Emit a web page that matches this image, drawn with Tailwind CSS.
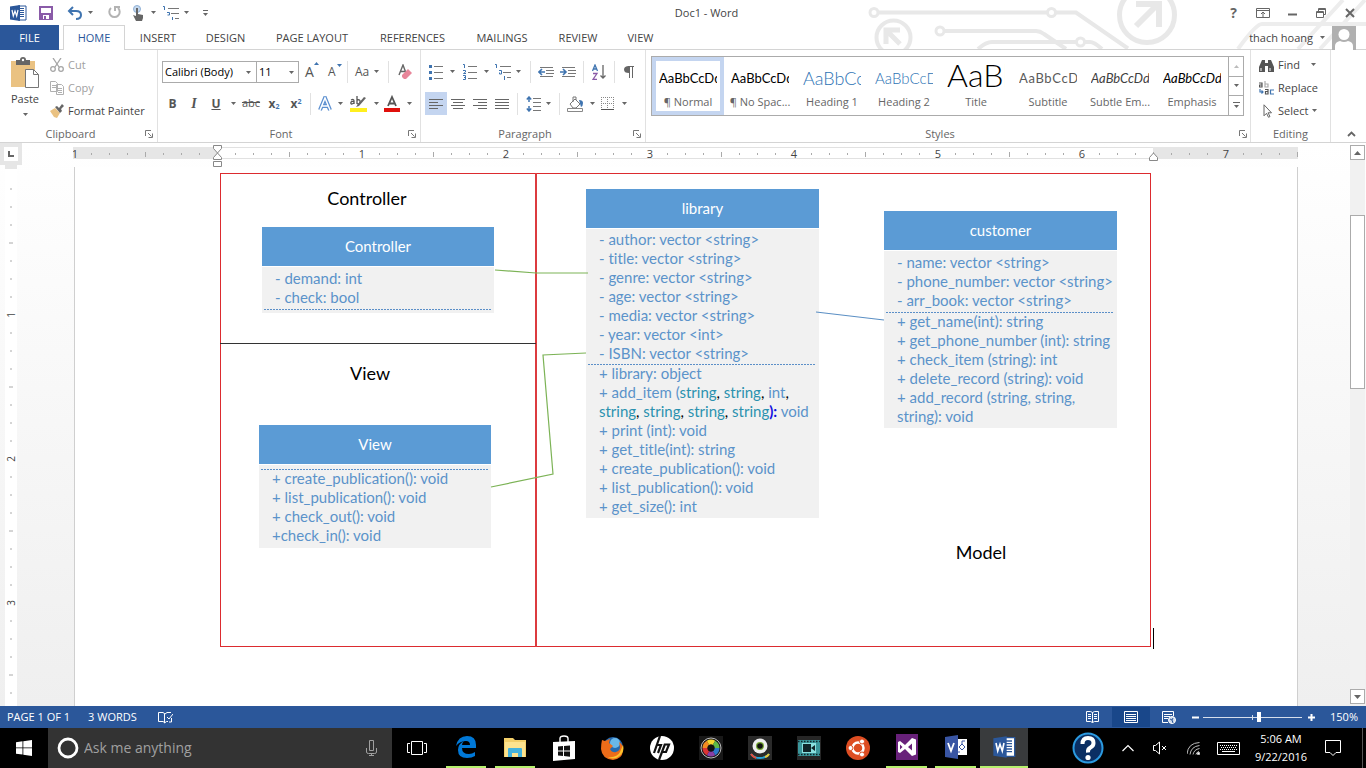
<!DOCTYPE html>
<html lang="en">
<head>
<meta charset="utf-8">
<title>Doc1 - Word</title>
<script src="https://cdn.jsdelivr.net/npm/@tailwindcss/browser@4"></script>
</head>
<body class="flex h-screen flex-col overflow-hidden bg-white font-['Open_Sans','Noto_Sans',sans-serif] text-[11px] leading-4 text-[#444]">

<svg class="hidden" aria-hidden="true">
  <symbol id="dn" viewBox="0 0 7 4"><path d="M1 0h5L3.500 3z" fill="#666"/></symbol>
  <symbol id="launch" viewBox="0 0 8 8"><path d="M.5 6V.5H6M3 3l3.500 3.500M7.500 3.500v4h-4" fill="none" stroke="#777"/></symbol>
  <symbol id="word" viewBox="0 0 18 18"><path d="M9 2h8v14H9z" fill="#fff" stroke="#2b579a"/><path d="M10 4.500h5M10 6.500h5M10 8.500h5M10 10.500h5M10 12.500h5" stroke="#2b579a"/><path d="M1 2.500L11 1v16L1 15.500z" fill="#2b579a"/><path d="M3 6l1.300 6L6 7l1.700 5L9 6" fill="none" stroke="#fff" stroke-width="1.200"/></symbol>
</svg>

<header class="relative h-[50px] shrink-0 border-b border-[#d4d4d4]">
  <svg class="absolute top-0 right-0 h-[49px] w-[526px]" viewBox="840 0 526 49" fill="none" stroke="#e8e8e8" stroke-width="4" aria-hidden="true">
    <circle cx="874" cy="12.500" r="4" stroke-width="3"/><path d="M878 12.500h169M1056 12.500h20l52 36"/><circle cx="1051.500" cy="12.500" r="4" stroke-width="3"/>
    <circle cx="940" cy="31" r="4" stroke-width="3"/><path d="M944 31h92q4 0 8 3l22 15M978 49q8-7 14-7h84M1085 42h5q4 0 12 7"/><circle cx="1080.500" cy="42" r="4" stroke-width="3"/>
    <circle cx="893.500" cy="37.500" r="17"/><path d="M900 44l-12-12M886 44V30h14" stroke-width="5"/>
    <circle cx="1147" cy="15" r="27.500" stroke-width="5"/><path d="M1136 26l22-22M1136 4h23v23" stroke-width="6"/>
    <path d="M1238 49q18-25 24-25h104M1298 49l45-49M1320 49l45-49" stroke="#ededed"/>
  </svg>
  <div class="relative flex h-[25px] items-center">
    <div class="flex w-[220px] items-center gap-[10px] pl-[9px]">
      <svg class="size-[18px]"><use href="#word"/></svg>
      <button aria-label="Save" class="ml-[2px]"><svg class="size-[14px]" viewBox="0 0 14 14"><path d="M1 1h12v12H1z" fill="#fff" stroke="#8a5ba8" stroke-width="2"/><path d="M1 7h12v6H1z" fill="#8a5ba8"/><path d="M4 9h6v4H4z" fill="#fff"/><path d="M5 10h2v3H5z" fill="#8a5ba8"/></svg></button>
      <button aria-label="Undo" class="ml-[4px] flex items-center gap-[5px]"><svg class="h-4 w-[15px]" viewBox="0 0 15 16" fill="none" stroke="#3f74b0" stroke-width="2"><path d="M6 2L2 6l4 4M2 6h7q5 0 5 4t-5 4"/></svg><svg class="h-1 w-[7px]"><use href="#dn"/></svg></button>
      <button aria-label="Repeat" class="ml-[3px]"><svg class="size-[15px]" viewBox="0 0 15 15" fill="none" stroke="#b3b3b3" stroke-width="2"><path d="M4 3a5.200 5.200 0 1 0 7 0M8 6V2h5"/></svg></button>
      <button aria-label="Touch mode" class="flex items-center gap-[5px]"><svg class="h-4 w-[13px]" viewBox="0 0 13 16"><circle cx="5" cy="4" r="3.500" fill="#c6d9ee" stroke="#8fb0d6"/><path d="M4 3h2v6l5 1v3l-1 3H4L1 10l3 1z" fill="#666"/></svg><svg class="h-1 w-[7px]"><use href="#dn"/></svg></button>
    </div>
    <button aria-label="Multilevel list" class="-ml-[57px] flex items-center gap-[4px]"><svg class="h-4 w-4" viewBox="0 0 16 16"><path d="M5 3.500h11M8 8.500h8M12 13.500h4" stroke="#777"/><path d="M0 1.500h1.500V5M4 7.500h2.500V10H4.500M9.500 12v3" fill="none" stroke="#3f74b0"/></svg><svg class="h-1 w-[7px]"><use href="#dn"/></svg></button>
    <button aria-label="Customize toolbar" class="ml-[12px]"><svg class="h-2 w-[7px]" viewBox="0 0 7 8"><path d="M1 1.500h5" stroke="#666"/><path d="M1 4h5L3.500 7z" fill="#666"/></svg></button>
    <p class="flex-1 pl-[298px] text-center">Doc1 - Word</p>
    <div class="flex w-[460px] justify-end gap-[15px] pr-[9px] text-[#666]">
      <button aria-label="Help" class="w-[15px] text-sm leading-4 font-bold">?</button>
      <button aria-label="Ribbon display options"><svg class="h-3 w-[14px]" viewBox="0 0 14 12" fill="none" stroke="#666"><path d="M.5 1.500h13v9H.5zM.5 3.500h13M7 10V5M5 7l2-2 2 2"/></svg></button>
      <button aria-label="Minimize"><svg class="h-3 w-[14px]" viewBox="0 0 14 12"><path d="M3 7.500h9" stroke="#666" stroke-width="2"/></svg></button>
      <button aria-label="Restore"><svg class="h-3 w-[14px]" viewBox="0 0 14 12" fill="none" stroke="#666"><path d="M4.500 4V1.500h7v6H9M2.500 4.500h7v6h-7zM2.500 5.500h7M4.500 2.500h7"/></svg></button>
      <button aria-label="Close"><svg class="h-3 w-[14px]" viewBox="0 0 14 12"><path d="M3 2l8 8M11 2l-8 8" stroke="#666" stroke-width="2"/></svg></button>
    </div>
  </div>
  <nav class="relative flex h-[25px] items-stretch" aria-label="Ribbon tabs">
    <button class="w-[59px] bg-[#2b579a] text-white">FILE</button>
    <button class="ml-[4px] h-[25px] w-[62px] border border-b-0 border-[#d4d4d4] bg-white text-[#2b579a]">HOME</button>
    <button class="w-[66px]">INSERT</button>
    <button class="w-[69px]">DESIGN</button>
    <button class="w-[104px]">PAGE LAYOUT</button>
    <button class="w-[97px]">REFERENCES</button>
    <button class="w-[82px]">MAILINGS</button>
    <button class="w-[70px]">REVIEW</button>
    <button class="w-[55px]">VIEW</button>
    <button class="ml-auto flex items-center gap-[6px] pr-[10px]">thach hoang <svg class="h-1 w-[7px]"><use href="#dn"/></svg>
      <svg class="size-6" viewBox="0 0 24 24"><path d="M0 0h24v24H0z" fill="#b0b0b0"/><circle cx="12" cy="8.500" r="5.500" fill="#fff"/><path d="M3 24v-4q0-4 5-5 4 2 8 0 5 1 5 5v4z" fill="#fff"/></svg></button>
  </nav>
</header>

<section class="flex h-[93px] shrink-0 border-b border-[#d4d4d4]" aria-label="Ribbon">
  <!-- Clipboard -->
  <div class="flex w-[158px] flex-col border-r border-[#e1e1e1]">
    <div class="flex flex-1">
      <button class="flex w-[50px] flex-col items-center pt-[7px]">
        <svg class="h-8 w-[30px]" viewBox="0 0 30 32"><path d="M1 4h24v26H1z" fill="#eac282"/><path d="M6 3h4q0-3 3-3t3 3h4v5H6z" fill="#666"/><circle cx="13" cy="3" r="1.200" fill="#fff"/><path d="M15.500 12.500h8l5 5v13h-13z" fill="#fff" stroke="#777"/><path d="M23.500 12.500v5h5" fill="none" stroke="#777"/></svg>
        <span class="pt-[2px]">Paste</span><svg class="mt-[6px] h-1 w-[7px]"><use href="#dn"/></svg>
      </button>
      <div class="flex flex-col gap-[7px] pt-[7px] text-[#a0a0a0]">
        <button class="flex items-center gap-1"><svg class="size-[14px]" viewBox="0 0 14 14" fill="none" stroke="#a5a5a5" stroke-width="1.300"><path d="M3 0l6 9M11 0L5 9"/><circle cx="3" cy="11" r="2.300"/><circle cx="11" cy="11" r="2.300"/></svg>Cut</button>
        <button class="flex items-center gap-1"><svg class="size-[14px]" viewBox="0 0 14 14" fill="#fff" stroke="#b0b0b0"><path d="M.5.500h5l2 2v8h-7zM2 4.500h4M2 6.500h4M6.500 3.500h5l2 2v8h-7zM8 7.500h4M8 9.500h4M8 11.500h4"/></svg>Copy</button>
        <button class="flex items-center gap-1 text-[#444]"><svg class="size-[14px]" viewBox="0 0 14 14"><path d="M0 7l5-3 5 5-3 5-3-1z" fill="#eac282"/><path d="M5 3l2-1 2 2 3-4 2 2-3 3 1 2-2 2z" fill="#666"/></svg>Format Painter</button>
      </div>
    </div>
    <div class="flex h-4 items-center text-[#666]"><span class="flex-1 pr-1 text-center">Clipboard</span><button aria-label="Clipboard options" class="w-[12px]"><svg class="size-2"><use href="#launch"/></svg></button></div>
  </div>
  <!-- Font -->
  <div class="flex w-[263px] flex-col border-r border-[#e1e1e1]">
    <div class="flex flex-1 flex-col pl-[4px]">
      <div class="mt-[11px] flex h-[22px] items-center">
        <div class="relative h-[22px] w-[95px] border border-[#ababab]"><select aria-label="Font name" class="h-full w-full appearance-none pl-[2px] text-[11px] text-black"><option>Calibri (Body)</option></select><svg class="pointer-events-none absolute top-[9px] right-1 h-1 w-[7px]"><use href="#dn"/></svg></div>
        <div class="relative -ml-px h-[22px] w-[43px] border border-[#ababab]"><select aria-label="Font size" class="h-full w-full appearance-none pl-[2px] text-[11px] text-black"><option>11</option></select><svg class="pointer-events-none absolute top-[9px] right-[3px] h-1 w-[7px]"><use href="#dn"/></svg></div>
        <button class="relative ml-[6px] w-[16px] text-left text-sm text-[#555]" aria-label="Grow font">A<svg class="absolute top-0 right-[2px] h-[3px] w-[5px]" viewBox="0 0 5 3"><path d="M0 3h5L2.500 0z" fill="#3f74b0"/></svg></button>
        <button class="relative ml-[7px] w-[16px] text-left text-xs text-[#555]" aria-label="Shrink font">A<svg class="absolute top-0 right-[2px] h-[3px] w-[5px]" viewBox="0 0 5 3"><path d="M0 0h5L2.500 3z" fill="#3f74b0"/></svg></button>
        <i class="ml-[3px] h-[22px] w-px bg-[#e1e1e1]"></i>
        <button class="ml-[7px] flex items-center gap-[4px] text-xs text-[#555]" aria-label="Change case">Aa<svg class="h-1 w-[7px]"><use href="#dn"/></svg></button>
        <i class="ml-[8px] h-[22px] w-px bg-[#e1e1e1]"></i>
        <button class="ml-[9px]" aria-label="Clear formatting"><svg class="h-4 w-[14px]" viewBox="0 0 14 16"><path d="M1 11L5 1l3 8M2.500 7.500h5" fill="none" stroke="#666" stroke-width="1.400"/><path d="M4 11l6-6 4 4-6 6H6l-2-2z" fill="#e8869a"/></svg></button>
      </div>
      <div class="mt-[9px] flex h-[23px] items-center text-xs text-[#555]">
        <button class="w-[21px] font-bold">B</button>
        <button class="w-[22px] font-['Liberation_Serif',serif] text-sm font-bold italic">I</button>
        <button class="w-[22px] font-bold underline">U</button>
        <button class="flex w-[12px] justify-center" aria-label="Underline style"><svg class="h-1 w-[7px]"><use href="#dn"/></svg></button>
        <button class="w-[24px] text-[11px] line-through">abc</button>
        <button class="w-[22px] font-bold">x<sub class="text-[7px] text-[#3f74b0]">2</sub></button>
        <button class="w-[22px] font-bold">x<sup class="text-[7px] text-[#3f74b0]">2</sup></button>
        <i class="mx-[3px] h-[22px] w-px bg-[#e1e1e1]"></i>
        <button class="flex w-[34px] items-center gap-[4px] pl-[3px]" aria-label="Text effects"><svg class="size-4" viewBox="0 0 16 16" fill="none"><path d="M3 14L8 2l5 12M5 10h6" stroke="#5b8fd0" stroke-width="4"/><path d="M3 14L8 2l5 12M5 10h6" stroke="#fff" stroke-width="1.500"/></svg><svg class="h-1 w-[7px]"><use href="#dn"/></svg></button>
        <button class="flex w-[35px] items-center gap-[6px] pl-[2px]" aria-label="Highlight color"><svg class="size-[17px]" viewBox="0 0 17 17"><path d="M0 13h17v4H0z" fill="#ffef1f"/><path d="M1 5q3-1.500 3 1v3M4 6.500Q.8 6 .8 8T4 8M7 1v8M7 5q3.500-1 3 2T7 8.500" fill="none" stroke="#555" stroke-width="1.300"/><path d="M6 12l3-1 7-8-2-1-6 7z" fill="#666"/></svg><svg class="h-1 w-[7px]"><use href="#dn"/></svg></button>
        <button class="flex w-[34px] items-center gap-[6px] pl-px" aria-label="Font color"><svg class="h-[17px] w-4" viewBox="0 0 16 17"><path d="M4 11L8 2l4 9M5.500 8.500h5" fill="none" stroke="#555" stroke-width="1.800"/><path d="M0 13h16v4H0z" fill="#e0100c"/></svg><svg class="h-1 w-[7px]"><use href="#dn"/></svg></button>
      </div>
    </div>
    <div class="flex h-4 items-center text-[#666]"><span class="flex-1 pr-1 text-center">Font</span><button aria-label="Font options" class="w-[12px]"><svg class="size-2"><use href="#launch"/></svg></button></div>
  </div>
  <!-- Paragraph -->
  <div class="flex w-[225px] flex-col border-r border-[#e1e1e1]">
    <div class="flex flex-1 flex-col pl-[4px]">
      <div class="mt-[11px] flex h-[22px] items-center">
        <button class="flex w-[34px] items-center gap-[6px] pl-[4px]" aria-label="Bullets"><svg class="h-4 w-[14px]" viewBox="0 0 14 16"><path d="M5 2.500h9M5 8.500h9M5 14.500h9" stroke="#777"/><path d="M0 1h3v3H0zM0 7h3v3H0zM0 13h3v3H0z" fill="#3f74b0"/></svg><svg class="h-1 w-[7px]"><use href="#dn"/></svg></button>
        <button class="flex w-[34px] items-center gap-[6px] pl-[4px]" aria-label="Numbering"><svg class="h-4 w-[14px]" viewBox="0 0 14 16"><path d="M5 2.500h9M5 8.500h9M5 14.500h9" stroke="#777"/><path d="M0 .500h1.500V4M0 6.500h2.500v1.500L.5 9.500H3M0 11.500h2.500v4H0M1 13.500h1" fill="none" stroke="#3f74b0"/></svg><svg class="h-1 w-[7px]"><use href="#dn"/></svg></button>
        <button class="flex w-[34px] items-center gap-[4px] pl-[2px]" aria-label="Multilevel list"><svg class="size-4" viewBox="0 0 16 16"><path d="M5 2.500h11M8 8.500h8M12 13.500h4" stroke="#777"/><path d="M0 .500h1.500V4M4 6.500h2.500V10H4.500V8.500M9.500 12v4" fill="none" stroke="#3f74b0"/></svg><svg class="h-1 w-[7px]"><use href="#dn"/></svg></button>
        <i class="ml-[3px] h-[22px] w-px bg-[#e1e1e1]"></i>
        <button class="ml-[7px]" aria-label="Decrease indent"><svg class="h-3 w-4" viewBox="0 0 16 12"><path d="M2 1.500h13M8 4.500h8M8 7.500h8M2 10.500h13" stroke="#777"/><path d="M7 6H1M4 3L1 6l3 3" fill="none" stroke="#3f74b0" stroke-width="1.600"/></svg></button>
        <button class="ml-[6px]" aria-label="Increase indent"><svg class="h-3 w-4" viewBox="0 0 16 12"><path d="M2 1.500h13M8 4.500h8M8 7.500h8M2 10.500h13" stroke="#777"/><path d="M0 6h6M3 3l3 3-3 3" fill="none" stroke="#3f74b0" stroke-width="1.600"/></svg></button>
        <i class="ml-[7px] h-[22px] w-px bg-[#e1e1e1]"></i>
        <button class="ml-[8px]" aria-label="Sort"><svg class="h-4 w-[14px]" viewBox="0 0 14 16" fill="none"><path d="M.5 7L3 1l2.500 6M1.500 5h3" stroke="#3f74b0" stroke-width="1.300"/><path d="M1 9.500h4L1 15.500h4" stroke="#8a5ba8" stroke-width="1.300"/><path d="M11 1v13M8.500 11.500L11 14l2.500-2.500" stroke="#666" stroke-width="1.300"/></svg></button>
        <i class="ml-[8px] h-[22px] w-px bg-[#e1e1e1]"></i>
        <button class="ml-[9px]" aria-label="Show marks"><svg class="h-3 w-[10px]" viewBox="0 0 10 12"><path d="M4 .5h6M5.500 0v12M8.500 0v12" stroke="#666"/><path d="M5 0v7Q0 7 0 3.500T5 0z" fill="#666"/></svg></button>
      </div>
      <div class="mt-[9px] flex h-[23px] items-center">
        <button class="flex h-[23px] w-[22px] items-center justify-center bg-[#c4d5f0]" aria-label="Align left"><svg class="h-3 w-[14px]" viewBox="0 0 14 12"><path d="M0 1.500h14M0 4.500h9M0 7.500h14M0 10.500h9" stroke="#666"/></svg></button>
        <button class="flex w-[22px] justify-center" aria-label="Center"><svg class="h-3 w-[14px]" viewBox="0 0 14 12"><path d="M0 1.500h14M2 4.500h10M0 7.500h14M2 10.500h10" stroke="#666"/></svg></button>
        <button class="flex w-[22px] justify-center" aria-label="Align right"><svg class="h-3 w-[14px]" viewBox="0 0 14 12"><path d="M0 1.500h14M5 4.500h9M0 7.500h14M5 10.500h9" stroke="#666"/></svg></button>
        <button class="flex w-[22px] justify-center" aria-label="Justify"><svg class="h-3 w-[14px]" viewBox="0 0 14 12"><path d="M0 1.500h14M0 4.500h14M0 7.500h14M0 10.500h14" stroke="#666"/></svg></button>
        <i class="ml-[4px] h-[22px] w-px bg-[#e1e1e1]"></i>
        <button class="ml-[8px] flex w-[33px] items-center gap-[4px]" aria-label="Line spacing"><svg class="h-4 w-[15px]" viewBox="0 0 15 16" fill="none"><path d="M7 2.500h8M7 6.500h8M7 10.500h8M7 14.500h8" stroke="#777"/><path d="M3 1v5M.8 3.500L3 1l2.200 2.500M3 10v5M.8 12.500L3 15l2.200-2.500" stroke="#3f74b0" stroke-width="1.500"/></svg><svg class="h-1 w-[7px]"><use href="#dn"/></svg></button>
        <i class="h-[22px] w-px bg-[#e1e1e1]"></i>
        <button class="ml-[7px] flex w-[34px] items-center gap-[5px]" aria-label="Shading"><svg class="h-4 w-[17px]" viewBox="0 0 17 16" fill="none"><path d="M.5 12.500h15v3H.5z" stroke="#888"/><path d="M3 8l5-5 5 5-4 4H6zM6 6V1h3v3" stroke="#777"/><path d="M12 4q4 0 4 3t-2 4z" fill="#3f74b0"/></svg><svg class="h-1 w-[7px]"><use href="#dn"/></svg></button>
        <button class="flex items-center gap-[7px]" aria-label="Borders"><svg class="size-[13px]" viewBox="0 0 13 13"><path d="M.5 0v12M6.500 0v12M12.500 0v12M0 .5h13M0 6.500h13" stroke="#888" stroke-dasharray="1 1"/><path d="M0 12.500h13" stroke="#555"/></svg><svg class="h-1 w-[7px]"><use href="#dn"/></svg></button>
      </div>
    </div>
    <div class="flex h-4 items-center text-[#666]"><span class="flex-1 pr-1 text-center">Paragraph</span><button aria-label="Paragraph options" class="w-[12px]"><svg class="size-2"><use href="#launch"/></svg></button></div>
  </div>
  <!-- Styles -->
  <div class="flex min-w-0 flex-1 flex-col border-r border-[#e1e1e1]">
    <div class="flex-1 pt-[6px] pr-[6px] pl-[5px]">
      <div class="flex h-[60px] border border-[#ababab] text-center text-[#666]">
        <div class="grid min-w-0 flex-1 grid-cols-8">
          <button class="flex flex-col border-4 border-[#c4d5f0] px-[3px]"><span class="flex h-[34px] w-full items-center overflow-hidden font-['Lato'] text-[13px] whitespace-nowrap text-black">AaBbCcDd</span><span class="-mt-px w-full whitespace-nowrap">¶ Normal</span></button>
          <button class="flex flex-col p-1 px-[7px]"><span class="flex h-[34px] w-full items-center overflow-hidden font-['Lato'] text-[13px] whitespace-nowrap text-black">AaBbCcDd</span><span class="-mx-1 -mt-px whitespace-nowrap">¶ No Spac...</span></button>
          <button class="flex flex-col p-1 px-[7px]"><span class="flex h-[34px] w-full items-center overflow-hidden font-['Lato'] text-lg font-light whitespace-nowrap text-[#2e74b5]">AaBbCc</span><span class="-mx-1 -mt-px self-center whitespace-nowrap">Heading 1</span></button>
          <button class="flex flex-col p-1 px-[7px]"><span class="flex h-[34px] w-full items-center overflow-hidden font-['Lato'] text-[15px] font-light whitespace-nowrap text-[#2e74b5]">AaBbCcD</span><span class="-mx-1 -mt-px self-center whitespace-nowrap">Heading 2</span></button>
          <button class="flex flex-col p-1 px-[7px]"><span class="flex h-[34px] w-full items-center overflow-hidden pb-[6px] font-['Lato'] text-[32px] font-light whitespace-nowrap text-black">AaBb</span><span class="-mt-px w-full">Title</span></button>
          <button class="flex flex-col p-1 px-[7px]"><span class="flex h-[34px] w-full items-center overflow-hidden font-['Lato'] text-[13px] tracking-wider whitespace-nowrap text-[#5a5a5a]">AaBbCcD</span><span class="-mt-px w-full">Subtitle</span></button>
          <button class="flex flex-col p-1 px-[7px]"><span class="flex h-[34px] w-full items-center overflow-hidden font-['Lato'] text-[13px] whitespace-nowrap text-[#404040] italic">AaBbCcDd</span><span class="-mx-1 -mt-px whitespace-nowrap">Subtle Em...</span></button>
          <button class="flex flex-col p-1 px-[7px]"><span class="flex h-[34px] w-full items-center overflow-hidden font-['Lato'] text-[13px] whitespace-nowrap text-black italic">AaBbCcDd</span><span class="-mt-px w-full">Emphasis</span></button>
        </div>
        <div class="flex w-[15px] flex-col divide-y divide-[#ababab] border-l border-[#ababab]">
          <button class="flex flex-1 items-center justify-center" aria-label="Previous styles"><svg class="h-1 w-[7px]" viewBox="0 0 7 4"><path d="M1 4h5L3.500 1z" fill="#bbb"/></svg></button>
          <button class="flex flex-1 items-center justify-center" aria-label="Next styles"><svg class="h-1 w-[7px]"><use href="#dn"/></svg></button>
          <button class="flex flex-1 items-center justify-center" aria-label="More styles"><svg class="h-[7px] w-[7px]" viewBox="0 0 7 7"><path d="M0 .5h7" stroke="#666"/><path d="M1 3h5L3.500 6z" fill="#666"/></svg></button>
        </div>
      </div>
    </div>
    <div class="flex h-4 items-center text-[#666]"><span class="flex-1 pr-[5px] text-center">Styles</span><button aria-label="Styles options" class="w-[11px]"><svg class="size-2"><use href="#launch"/></svg></button></div>
  </div>
  <!-- Editing -->
  <div class="flex w-[80px] flex-col border-r border-[#e1e1e1]">
    <div class="flex flex-1 flex-col items-start gap-[7px] pt-[7px] pl-[8px]">
      <button class="flex items-center gap-1"><svg class="h-[13px] w-[15px]" viewBox="0 0 15 13" fill="#555"><path d="M3 1h3v3h3V1h3l3 7v5H9V7H6v6H0V8z"/><path d="M2 9v3M11 9v3" stroke="#fff"/></svg>Find<svg class="ml-[6px] h-1 w-[7px]"><use href="#dn"/></svg></button>
      <button class="flex items-center gap-1"><svg class="h-[14px] w-[15px]" viewBox="0 0 15 14" fill="none" stroke-width="1.200"><path d="M0 2h3v4H.5V4H3" stroke="#555"/><path d="M6 0v6h3V3H6" stroke="#aaa"/><path d="M1 8v3h3M2.500 9.500L4 11l-1.500 1.500" stroke="#3f74b0"/><path d="M6 8.500h3V13H6.500v-2.500H9" stroke="#555"/><path d="M15 9h-3.500v4H15" stroke="#3f74b0"/></svg>Replace</button>
      <button class="flex items-center gap-1"><svg class="h-[14px] w-[15px]" viewBox="0 0 15 14"><path d="M5 .8v11l2.500-2.500 2 4 1.500-.8-2-3.700h3.500z" fill="#fff" stroke="#666"/></svg>Select<svg class="-ml-[1px] h-1 w-[7px]"><use href="#dn"/></svg></button>
    </div>
    <p class="h-4 text-center text-[#666]">Editing</p>
  </div>
  <div class="flex w-[35px] items-end pb-[5px] pl-[16px]"><button aria-label="Collapse ribbon"><svg class="h-[6px] w-[9px]" viewBox="0 0 9 6"><path d="M1 5l3.500-3.500L8 5" fill="none" stroke="#666" stroke-width="1.800"/></svg></button></div>
</section>

<main class="flex min-h-0 flex-1 bg-linear-to-b from-white to-[#efefef]">
  <!-- Vertical ruler -->
  <div class="flex w-[22px] shrink-0 flex-col">
    <button aria-label="Tab selector" class="flex h-[22px] w-[22px] items-center justify-center border-4 border-[#e6e6e6] bg-white"><svg class="size-[6px]" viewBox="0 0 6 6"><path d="M1 0v5h5" fill="none" stroke="#666" stroke-width="2"/></svg></button>
    <svg class="ml-[5px] w-3 flex-1 bg-white" aria-label="Vertical ruler">
      <defs><pattern id="vt" width="12" height="144" y="6" patternUnits="userSpaceOnUse"><path d="M5 18h2M5 36h2M5 54h2M4 72h4M5 90h2M5 108h2M5 126h2" stroke="#aaa"/></pattern></defs>
      <rect width="12" height="4" fill="#e6e6e6"/><rect y="6" width="12" height="100%" fill="url(#vt)"/>
      <g font-size="10" fill="#444" text-anchor="middle"><text transform="translate(10 150) rotate(-90)">1</text><text transform="translate(10 294) rotate(-90)">2</text><text transform="translate(10 438) rotate(-90)">3</text></g>
    </svg>
  </div>
  <div class="flex min-w-0 flex-1 flex-col items-center overflow-hidden">
    <!-- Horizontal ruler, 144px to the inch -->
    <svg class="h-6 w-[1226px] shrink-0" viewBox="73 143 1226 24" aria-label="Horizontal ruler">
      <defs><pattern id="ht" x="217" width="144" height="12" y="148" patternUnits="userSpaceOnUse"><path d="M18.500 5v2M36.500 5v2M54.500 5v2M72.500 4v5M90.500 5v2M108.500 5v2M126.500 5v2" stroke="#aaa"/></pattern></defs>
      <path d="M73 147h145v12H73zM1153 147h145v12h-145z" fill="#e6e6e6"/><path d="M218 147.500h935M218 158.500h935" stroke="#e1e1e1"/><path d="M218 148h935v10H218z" fill="#fff"/>
      <path d="M73 148h1225v12H73z" fill="url(#ht)"/>
      <g font-size="11" fill="#444" text-anchor="middle"><text x="75" y="158">1</text><text x="362" y="158">1</text><text x="506" y="158">2</text><text x="650" y="158">3</text><text x="794" y="158">4</text><text x="938" y="158">5</text><text x="1082" y="158">6</text><text x="1226" y="158">7</text></g>
      <path d="M213.500 145.500h8v3l-4 4.500 4 4.500v2h-8v-2l4-4.500-4-4.500zM213.500 161.500h8v5h-8zM1149.500 160.500v-3l4-4.500 4 4.500v3z" fill="#fff" stroke="#888"/>
    </svg>
    <!-- Document page with the class diagram -->
    <article id="page" class="relative w-[1224px] flex-1 border-x border-[#cfcfcf] bg-white font-['Lato',sans-serif] text-[15px] leading-[19px] text-[#5b93ca] [font-variant-ligatures:none]">
      <div class="absolute top-[6px] left-[145px] h-[474px] w-[931px] border border-[#dc2b2f]"></div>
      <h2 class="absolute top-[19px] left-[212px] w-[160px] text-center text-lg leading-6 text-black">Controller</h2>
      <h2 class="absolute top-[194px] left-[215px] w-[160px] text-center text-lg leading-6 text-black">View</h2>
      <h2 class="absolute top-[373px] left-[826px] w-[160px] text-center text-lg leading-6 text-black">Model</h2>

      <section class="absolute top-[60px] left-[187px] w-[232px] bg-[#f1f1f1] pb-[3px]">
        <h3 class="flex h-10 items-center justify-center border-b border-white bg-[#5b9bd5] text-white">Controller</h3>
        <ul class="pt-[2px] pl-[13px]"><li>- demand: int</li><li>- check: bool</li></ul>
        <hr class="mt-[2px] mr-[3px] ml-[2px] h-px border-0 bg-[repeating-linear-gradient(90deg,#5b8fc8_0_2px,transparent_2px_3px)]">
      </section>
      <section class="absolute top-[258px] left-[184px] w-[232px] bg-[#f1f1f1] pb-[3px]">
        <h3 class="flex h-10 items-center justify-center border-b border-white bg-[#5b9bd5] text-white">View</h3>
        <hr class="mt-[4px] mr-[3px] ml-[2px] h-px border-0 bg-[repeating-linear-gradient(90deg,#5b8fc8_0_2px,transparent_2px_3px)]">
        <ul class="-mt-px pl-[13px]"><li>+ create_publication(): void</li><li>+ list_publication(): void</li><li>+ check_out(): void</li><li>+check_in(): void</li></ul>
      </section>
      <section class="absolute top-[22px] left-[511px] w-[233px] bg-[#f1f1f1] pb-[2px]">
        <h3 class="flex h-10 items-center justify-center border-b border-white bg-[#5b9bd5] text-white">library</h3>
        <ul class="pt-px pl-[13px]"><li>- author: vector &lt;string&gt;</li><li>- title: vector &lt;string&gt;</li><li>- genre: vector &lt;string&gt;</li><li>- age: vector &lt;string&gt;</li><li>- media: vector &lt;string&gt;</li><li>- year: vector &lt;int&gt;</li><li>- ISBN: vector &lt;string&gt;</li></ul>
        <hr class="mt-px mr-[3px] ml-[2px] h-px border-0 bg-[repeating-linear-gradient(90deg,#5b8fc8_0_2px,transparent_2px_3px)]">
        <ul class="-mt-px pl-[13px] whitespace-nowrap"><li>+ library: object</li><li>+ add_item (<span class="text-[#2b91af]">string<b class="font-normal text-black">,</b> string<b class="font-normal text-black">,</b></span> int<b class="font-normal text-black">,</b><br><span class="text-[#2b91af]">string<b class="font-normal text-black">,</b> string<b class="font-normal text-black">,</b> string<b class="font-normal text-black">,</b> string</span><b class="text-[#1010e0]">):</b> void</li><li>+ print (int): void</li><li>+ get_title(int): string</li><li>+ create_publication(): void</li><li>+ list_publication(): void</li><li>+ get_size(): int</li></ul>
      </section>
      <section class="absolute top-[44px] left-[809px] w-[233px] bg-[#f1f1f1] pb-[2px]">
        <h3 class="flex h-10 items-center justify-center border-b border-white bg-[#5b9bd5] text-white">customer</h3>
        <ul class="pt-[2px] pl-[13px]"><li>- name: vector &lt;string&gt;</li><li>- phone_number: vector &lt;string&gt;</li><li>- arr_book: vector &lt;string&gt;</li></ul>
        <hr class="mt-[2px] mr-[3px] ml-[2px] h-px border-0 bg-[repeating-linear-gradient(90deg,#5b8fc8_0_2px,transparent_2px_3px)]">
        <ul class="-mt-px pl-[13px] whitespace-nowrap"><li>+ get_name(int): string</li><li>+ get_phone_number (int): string</li><li>+ check_item (string): int</li><li>+ delete_record (string): void</li><li>+ add_record (string, string,<br>string): void</li></ul>
      </section>

      <svg class="pointer-events-none absolute top-0 left-0 h-[538px] w-[1222px]" viewBox="75 167 1222 538" fill="none" aria-hidden="true">
        <path d="M536 173v474" stroke="#dc3b3f" stroke-width="2"/>
        <path d="M220 343.500h316" stroke="#333"/>
        <path d="M495 270l41 3h52M491 487l62-13-10-119 43-2" stroke="#7cb356" stroke-width="1.200"/>
        <path d="M816 312l68 8" stroke="#5b8fc4" stroke-width="1.200"/>
        <path d="M1153.500 628v21" stroke="#000"/>
      </svg>
    </article>
  </div>
  <!-- Scrollbar -->
  <div class="flex w-4 shrink-0 flex-col pt-[2px] pr-px pb-[2px]" role="scrollbar" aria-label="Vertical scroll" aria-controls="page" aria-valuenow="15">
    <button aria-label="Scroll up" class="flex h-[15px] items-center justify-center border border-[#ababab] bg-white"><svg class="h-1 w-[7px]" viewBox="0 0 7 4"><path d="M0 4h7L3.500 0z" fill="#666"/></svg></button>
    <div class="flex-1 bg-[#f1f1f1] pt-[55px]"><div class="h-[174px] border border-[#ababab] bg-white"></div></div>
    <button aria-label="Scroll down" class="flex h-[15px] items-center justify-center border border-[#ababab] bg-white"><svg class="h-1 w-[7px]" viewBox="0 0 7 4"><path d="M0 0h7L3.500 4z" fill="#666"/></svg></button>
  </div>
</main>

<footer class="shrink-0">
  <div class="flex h-[22px] items-center bg-[#2b579a] pl-[7px] text-white">
    <button>PAGE 1 OF 1</button><button class="ml-[18px]">3 WORDS</button>
    <button class="ml-[21px]" aria-label="Proofing"><svg class="h-[13px] w-[15px]" viewBox="0 0 15 13" fill="none" stroke="#fff"><path d="M6.500 11.500L5 10.500H.5v-9H5l2 1.500L9 1.500h4M6.500 3v9l2-1.500H10M13.500 7v4H11M9 6l2 2 4-5"/></svg></button>
    <button class="ml-auto" aria-label="Read mode"><svg class="h-3 w-[13px]" viewBox="0 0 13 12" fill="none" stroke="#fff"><path d="M6.500 1.500v10M.5.500h4l2 1 2-1h4v10h-4l-2 1-2-1h-4zM2 3.500h3M2 5.500h3M2 7.500h3M8 3.500h3M8 5.500h3M8 7.500h3"/></svg></button>
    <button class="ml-[13px] flex h-5 w-[38px] items-center justify-center bg-[#19478a]" aria-label="Print layout"><svg class="h-3 w-[14px]" viewBox="0 0 14 12" fill="none" stroke="#fff"><path d="M.5.500h13v11H.5zM2 3.500h10M2 5.500h10M2 7.500h10M2 9.500h10"/></svg></button>
    <button class="ml-[12px]" aria-label="Web layout"><svg class="h-[13px] w-[14px]" viewBox="0 0 14 13" fill="none" stroke="#fff"><path d="M11.500 5V.500H.5v11H6M2 3.500h8M2 5.500h6M2 7.500h4"/><circle cx="10" cy="9" r="3.500" fill="#cdd9ea"/><path d="M8 8l2 1 1-2M10 9l1 3" stroke="#2b579a"/></svg></button>
    <svg class="ml-[16px] h-3 w-[124px]" viewBox="0 0 124 12"><path d="M0 6.500h7M116 6.500h7M119.500 3v7" stroke="#fff" stroke-width="2"/><path d="M11 6.500h99M60.500 4v5" stroke="#d5deec"/><path d="M65 1h4v10h-4z" fill="#fff"/></svg>
    <button class="w-[50px] pl-[6px] text-center">150%</button>
  </div>
  <div class="flex h-10 items-center bg-black text-white">
    <button class="flex w-12 justify-center" aria-label="Start"><svg class="size-4" viewBox="0 0 16 16" fill="#fff"><path d="M0 2.200l6.500-.9v6.200H0zM7.300 1.200L16 0v7.500H7.300zM0 8.300h6.500v6.200L0 13.700zM7.300 8.300H16V16l-8.700-1.200z"/></svg></button>
    <label class="flex h-10 w-[344px] items-center bg-[#333] pl-[9px]">
      <svg class="size-[22px]" viewBox="0 0 22 22"><circle cx="11" cy="11" r="9" fill="none" stroke="#fff" stroke-width="2.800"/></svg>
      <input aria-label="Search" placeholder="Ask me anything" class="ml-[5px] min-w-0 flex-1 bg-transparent text-sm placeholder:text-[#a0a0a0]">
      <svg class="mr-[15px] h-4 w-[11px]" viewBox="0 0 11 16" fill="none" stroke="#a0a0a0"><path d="M3.500.500h4v10h-4zM.5 8v4q0 1.500 2 1.500h6q2 0 2-1.500V8M5.500 13.500v2M3 15.500h5"/></svg>
    </label>
    <button class="flex w-[49px] justify-center" aria-label="Task view"><svg class="h-[14px] w-5" viewBox="0 0 20 14" fill="none" stroke="#fff"><path d="M4.500.500h11v13h-11zM3 2.500H.5v9H3M17 2.500h2.500v9H17"/></svg></button>
    <div class="flex h-10">
      <button class="mx-[5px] flex w-10 items-center justify-center border-b-2 border-[#b6f06e]" aria-label="Edge"><svg class="size-[22px]" viewBox="0 0 22 22"><path d="M1 10Q3 0 12 0q9 0 9 9v3H7q0 6 7 6 3 0 6-2v4q-3 2-8 2-9 0-9-8 0-6 6-9-2 2-2 4h8q0-4-4-4-6 0-10 5z" fill="#0078d7"/></svg></button>
      <button class="mx-[4px] flex w-10 items-center justify-center border-b-2 border-[#b6f06e]" aria-label="File Explorer"><svg class="h-[20px] w-[22px]" viewBox="0 0 22 20"><path d="M0 1h9l2 2h11v17H0z" fill="#f3cf6a"/><path d="M1 5h20v15H1z" fill="#fde38f"/><path d="M4 20v-8q0-1 1-1h12q1 0 1 1v8h-4v-4H8v4z" fill="#45b3dd"/></svg></button>
      <button class="flex w-[49px] items-center justify-center" aria-label="Store"><svg class="h-[26px] w-[22px]" viewBox="0 0 22 26"><path d="M7 7V3.500Q7 1 11 1t4 2.500V7" fill="none" stroke="#fff" stroke-width="1.400"/><path d="M0 7l22-1v18L0 26z" fill="#fff"/><path d="M5 11.500l5-.5v4.500H5zM11 11l6-.6v5.100h-6zM5 16.500h5V21l-5-.5zM11 16.500h6v5.200L11 21z" fill="#111"/></svg></button>
      <button class="flex w-[49px] items-center justify-center" aria-label="Firefox"><svg class="h-6 w-[23px]" viewBox="0 0 23 24"><circle cx="12" cy="11" r="10" fill="#2469b0"/><circle cx="14" cy="7" r="5" fill="#69b7e8"/><path d="M1 4l3 1 5-2-1 4 4 3-3 3q2 4 6 3 4-1 4-5l-1-5q5 3 4 9-1 8-10 9Q1 23 0 13q0-5 1-9z" fill="#ec6c19"/><path d="M22 9q2 8-5 12-5 3-10 0 9 1 12-5z" fill="#fbc22d"/></svg></button>
      <button class="flex w-[49px] items-center justify-center" aria-label="HP"><svg class="size-6" viewBox="0 0 24 24"><circle cx="12" cy="12" r="12" fill="#fff"/><path d="M10 0L4 17M7 9h4l-3 8M15 8l-6 16M14.500 8.500H19L16 16h-4.500" fill="none" stroke="#111" stroke-width="2.200"/></svg></button>
      <button class="flex w-[49px] items-center justify-center" aria-label="Camera suite"><svg class="size-6" viewBox="0 0 24 24" fill="none" stroke-width="5"><path d="M0 0h24v24H0z" fill="#181818"/><path d="M6 12a6 6 0 0 1 3-5.200" stroke="#f28b22"/><path d="M9 6.800a6 6 0 0 1 6 0" stroke="#f4d52e"/><path d="M15 6.800a6 6 0 0 1 3 5.200" stroke="#5eb946"/><path d="M18 12a6 6 0 0 1-3 5.200" stroke="#2b78c9"/><path d="M15 17.200a6 6 0 0 1-6 0" stroke="#8a3fa5"/><path d="M9 17.200A6 6 0 0 1 6 12" stroke="#dc3434"/><circle cx="12" cy="12" r="10" stroke="#bbb" stroke-width="1"/><circle cx="12" cy="12" r="3.500" fill="#111"/></svg></button>
      <button class="flex w-[49px] items-center justify-center" aria-label="Webcam"><svg class="size-6" viewBox="0 0 24 24"><path d="M0 0h24v24H0z" fill="#2a2a2a"/><path d="M3 18q3 4 9 4t9-4" fill="none" stroke="#26a5d9" stroke-width="2"/><path d="M3 18q2 3 5 4" fill="none" stroke="#e84b3a" stroke-width="2"/><path d="M17 21q3-1 4-3" fill="none" stroke="#e9c83a" stroke-width="2"/><circle cx="12" cy="10" r="7.500" fill="#eee"/><circle cx="12" cy="10" r="4" fill="#76a733"/><circle cx="12" cy="10" r="2.800" fill="#111"/></svg></button>
      <button class="flex w-[49px] items-center justify-center" aria-label="Movie maker"><svg class="size-6" viewBox="0 0 24 24"><path d="M0 0h24v24H0z" fill="#262626"/><path d="M1 4h22v16H1z" fill="#3b979c"/><path d="M5 7h14v10H5z" fill="#8ae0df"/><path d="M1 5.500h22M1 18.500h22" stroke="#10272a" stroke-width="1.500" stroke-dasharray="1.500 1.500"/><path d="M6 8h8v8H6zM14 12l4-3v6z" fill="#102529"/></svg></button>
      <button class="flex w-[49px] items-center justify-center" aria-label="Ubuntu"><svg class="size-6" viewBox="0 0 24 24"><circle cx="12" cy="12" r="12" fill="#dd4d22"/><circle cx="12" cy="12" r="5.500" fill="none" stroke="#fff" stroke-width="2.500"/><g fill="#fff" stroke="#dd4d22"><circle cx="4.500" cy="12" r="2.500"/><circle cx="16" cy="5.500" r="2.500"/><circle cx="16" cy="18.500" r="2.500"/></g></svg></button>
      <button class="mx-[4px] flex w-[41px] items-center justify-center border-b-2 border-[#b6f06e]" aria-label="Visual Studio"><svg class="h-[26px] w-[22px]" viewBox="0 0 22 26"><path d="M0 0h22v26H0z" fill="#68217a"/><path d="M2 8l2-1 5 4 7-7 4 1.500v15L16 22l-7-7-5 4-2-1zM4 10.500v5L6.500 13zM12 13l4 3.500v-7z" fill="#fff" fill-rule="evenodd"/></svg></button>
      <button class="mx-[4px] flex w-[41px] items-center justify-center border-b-2 border-[#b6f06e]" aria-label="Visio"><svg class="size-6" viewBox="0 0 24 24"><path d="M11 4h12v16H11z" fill="#fff"/><path d="M15 12l3-3 3 3-3 3zM18 9V6h3M16 17h-3" fill="none" stroke="#3955a3"/><path d="M1 2l13-2v24L1 22z" fill="#3955a3"/><path d="M4 8l3 8 3-8" fill="none" stroke="#fff" stroke-width="1.800"/></svg></button>
      <button class="flex w-[48px] items-center justify-center border-b-2 border-[#b6f06e] bg-[#393b3d]" aria-label="Word"><svg class="size-6"><use href="#word"/></svg></button>
    </div>
    <div class="ml-auto flex h-10 items-center">
      <button aria-label="Help"><svg class="size-8" viewBox="0 0 32 32"><circle cx="16" cy="16" r="14.500" fill="#0b2f63" stroke="#2b9ae0" stroke-width="2"/><path d="M10.500 12q0-6 5.500-6t5.500 5q0 3-3 4.500t-2.500 5" fill="none" stroke="#fff" stroke-width="4"/><circle cx="16" cy="25.500" r="2.600" fill="#fff"/></svg></button>
      <button class="ml-[18px]" aria-label="Hidden icons"><svg class="h-2 w-3" viewBox="0 0 12 8"><path d="M.5 7L6 1.500 11.500 7" fill="none" stroke="#fff" stroke-width="1.200"/></svg></button>
      <button class="ml-[19px]" aria-label="Volume muted"><svg class="h-[14px] w-[14px]" viewBox="0 0 14 14" fill="none" stroke="#fff"><path d="M.5 4.500h2l4-3.500v12l-4-3.500h-2zM9 5l4 4M13 5L9 9"/></svg></button>
      <button class="ml-[20px]" aria-label="Wi-Fi"><svg class="size-[13px]" viewBox="0 0 13 13" fill="none" stroke="#bbb"><path d="M0 12Q1 1 12.500.500M3 12.500Q4 4.500 12.500 3.500M6 12.500Q7 7.500 12.500 6.500M9 12.500q0-2 3-3"/><circle cx="11.500" cy="11.500" r="1.300" fill="#fff"/></svg></button>
      <button class="ml-[17px]" aria-label="Keyboard"><svg class="h-[13px] w-[23px]" viewBox="0 0 23 13" fill="none" stroke="#fff"><path d="M.5.500h22v12H.5z"/><path d="M3 3.500h17M4 5.500h16M3 7.500h17" stroke-dasharray="1 1"/><path d="M5 9.500h13"/></svg></button>
      <div class="w-[82px] text-center leading-[18px]"><p>5:06 AM</p><p>9/22/2016</p></div>
      <button class="ml-[3px]" aria-label="Notifications"><svg class="size-4" viewBox="0 0 16 16"><path d="M.5.500h15v12H11l-3 3-3-3H.5z" fill="none" stroke="#fff"/></svg></button>
      <i class="ml-[21px] h-10 w-px bg-[#555]"></i><i class="w-[3px]"></i>
    </div>
  </div>
</footer>
</body>
</html>
